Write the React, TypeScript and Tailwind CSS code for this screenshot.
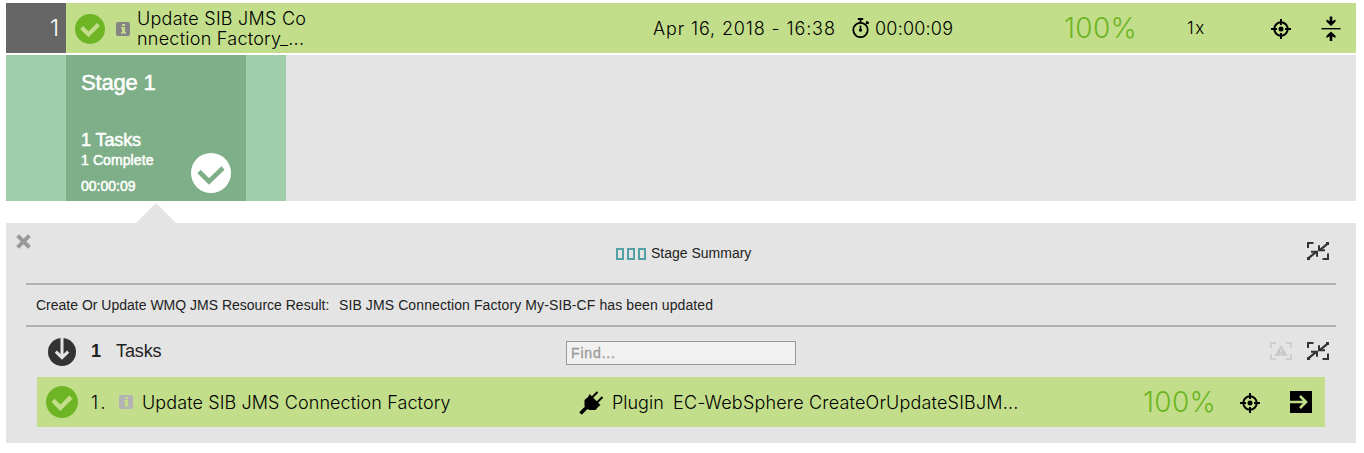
import React from 'react';

const LIGHT = "font-['Inter','Liberation_Sans',sans-serif] font-light whitespace-nowrap";

function CheckDisc({ size, disc, tick, thin = false }: { size: number; disc: string; tick: string; thin?: boolean }) {
  return (
    <svg width={size} height={size} viewBox="0 0 40 40" className="block shrink-0">
      <circle cx="20" cy="20" r="20" fill={disc} />
      <path
        d={thin ? 'M8 18.5 L18 28.5 L32 15' : 'M8.8 18 L18 27.2 L31.2 14'}
        fill="none"
        stroke={tick}
        strokeWidth={thin ? 4.6 : 5.6}
      />
    </svg>
  );
}

function InfoBadge({ fill, ink }: { fill: string; ink: string }) {
  return (
    <svg width="14" height="14" viewBox="0 0 14 14" className="block shrink-0">
      <rect width="14" height="14" rx="2" fill={fill} />
      <path d="M6 2h3v2H6zM5 5h4v5h1v1.500H5V10h1V6.500H5z" fill={ink} />
    </svg>
  );
}

function Target() {
  return (
    <svg width="20" height="20" viewBox="0 0 20 20" className="block shrink-0" fill="none" stroke="#000" strokeWidth="2">
      <circle cx="10" cy="10" r="6.7" />
      <circle cx="10" cy="10" r="2.5" fill="#000" stroke="none" />
      <path d="M10 0v6M10 14v6M0 10h6M14 10h6" />
    </svg>
  );
}

function Stopwatch() {
  return (
    <svg width="18" height="20" viewBox="0 0 18 20" className="block shrink-0" fill="none" stroke="#000" strokeWidth="1.8">
      <circle cx="8.5" cy="12" r="7.2" />
      <path d="M5.8 1h5.4M8.5 1v4M14 5.8l1.8-1.8M14.3 3.3l2.4 2.2" />
      <path d="M8.5 7.5v6" strokeWidth="1.6" />
      <circle cx="8.5" cy="12" r="1.6" fill="#000" stroke="none" />
    </svg>
  );
}

function CollapseRow() {
  return (
    <svg width="20" height="26" viewBox="0 0 20 26" className="block shrink-0" fill="none" stroke="#000">
      <path d="M0.5 12.7h19" strokeWidth="1.4" />
      <path d="M10 0.500v7M10 25v-7" strokeWidth="2.6" />
      <path d="M5.500 3.400l4.500 2.300 4.500-2.300v2.400L10 10 5.500 5.800zM5.500 22.100l4.500-2.300 4.500 2.300v-2.400L10 15.500 5.500 19.700z" fill="#000" stroke="none" />
    </svg>
  );
}

function Shrink() {
  return (
    <svg width="22" height="18" viewBox="0 0 22 18" className="block shrink-0" fill="none" stroke="#333">
      <path d="M1 6V1h5.5M15.5 17H21v-5.500" strokeWidth="2" />
      <path d="M1 16.6L9.200 9.800M21 1.400L12.800 8.200" strokeWidth="2.200" />
      <path d="M4 9.800h6v5M18 8.200h-6v-5" strokeWidth="2" />
      <path d="M0 15h3v3H0zM19 0h3v3h-3z" fill="#333" stroke="none" />
    </svg>
  );
}

function WarnFrame() {
  return (
    <svg width="22" height="18" viewBox="0 0 22 18" className="block shrink-0" fill="none" stroke="#cecece">
      <path d="M1 6V1h5M16 1h5v5M21 12v5h-5M6 17H1v-5" strokeWidth="1.800" />
      <path d="M11 3.200L17.500 13.800h-13z" fill="#c8c8c8" stroke="none" />
      <path d="M11 6.800v3.200M11 11v1.500" stroke="#e4e4e4" strokeWidth="1.300" />
    </svg>
  );
}

function Plug() {
  return (
    <svg width="25" height="25" viewBox="0 0 25 25" className="block shrink-0">
      <path d="M1.500 23.500L8 17" stroke="#000" strokeWidth="3.600" />
      <path d="M13 7.500L18.500 2M18 12.500L23.500 7" stroke="#000" strokeWidth="2" />
      <path d="M10.500 4L21.500 15 19.500 16.500 16.500 20H10L5.500 16V10L9.500 6.500z" fill="#000" />
    </svg>
  );
}

export default function App() {
  return (
    <main className="h-[453px] w-[1364px] overflow-hidden bg-white px-[6px] pt-[3px] font-['Liberation_Sans',Arial,sans-serif] text-[#222]">
      <header className={`flex h-[50px] w-[1350px] items-center bg-[#c3de8a] text-[18px] text-black ${LIGHT}`}>
        <div className="flex h-full w-[60px] items-center justify-end bg-[#666] pr-[7px] text-[23px] text-white">1</div>
        <div className="flex w-[71px] items-center pt-[2px] pl-[9px]">
          <CheckDisc size={30} disc="#6eb525" tick="#c3de8a" />
          <span className="ml-[11px]"><InfoBadge fill="#858585" ink="#c3de8a" /></span>
        </div>
        <div className="w-[516px] pt-px text-[18px] leading-[20px] tracking-[0.25px]">
          <p>Update SIB JMS Co</p>
          <p>nnection Factory_...</p>
        </div>
        <p className="w-[199px] tracking-[0.87px]">Apr 16, 2018 - 16:38</p>
        <div className="flex w-[212px] items-center">
          <Stopwatch />
          <span className="ml-[5px] tracking-[0.2px]">00:00:09</span>
        </div>
        <p className="w-[123px] text-[28px] tracking-[0.3px] text-[#6eb525]">100%</p>
        <p className="w-[84px] pt-px text-[17px] tracking-[1.5px]">1x</p>
        <span className="pt-[2px]"><Target /></span>
        <span className="ml-[30px] pt-px"><CollapseRow /></span>
      </header>

      <section className="mt-[2px] flex h-[146px] w-[1350px] bg-[#e4e4e4]">
        <div className="flex w-[280px] bg-[#a0ceab] pl-[60px]">
          <div className="flex w-[180px] justify-between bg-[#7eaf88] pr-[15px] pl-[15px] text-white [-webkit-text-stroke:0.5px_white]">
            <div className="whitespace-nowrap">
              <h2 className="mt-[15px] text-[22px] leading-[26px] tracking-[-0.2px]">Stage 1</h2>
              <p className="mt-[33px] text-[18px] leading-[22px] tracking-[-0.1px]">1 Tasks</p>
              <p className="text-[14px] leading-[18px] tracking-[0.1px]">1 Complete</p>
              <p className="mt-[8px] text-[14px] leading-[18px]">00:00:09</p>
            </div>
            <div className="mt-[98px]"><CheckDisc size={40} disc="#fff" tick="#7eaf88" thin /></div>
          </div>
        </div>
      </section>

      <svg width="40" height="20" viewBox="0 0 40 20" className="mt-[2px] ml-[130px] block">
        <path d="M20 0L40 20H0z" fill="#e4e4e4" />
      </svg>

      <section className="h-[220px] w-[1350px] bg-[#e4e4e4]">
        <div className="flex h-[60px] pl-[10px]">
          <svg width="15" height="15" viewBox="0 0 15 15" className="mt-[11px] block">
            <path d="M1.600 1.600L13.400 13.400M13.400 1.600L1.600 13.400" stroke="#999" strokeWidth="4" />
          </svg>
          <div className="ml-[585px] flex h-full w-[691px] items-center text-[14px] whitespace-nowrap">
            <svg width="30" height="12" viewBox="0 0 30 12" className="mt-px mr-[5px] block" fill="none" stroke="#53a1a5" strokeWidth="2">
              <path d="M1 1h6v10H1zM12 1h6v10h-6zM23 1h6v10h-6z" />
            </svg>
            Stage Summary
          </div>
          <span className="mt-[19px]"><Shrink /></span>
        </div>
        <div className="mx-[20px] flex h-[44px] items-center border-y-2 border-[#b0b0b0] pl-[10px] text-[14px] whitespace-nowrap">
          <span className="w-[303px]">Create Or Update WMQ JMS Resource Result:</span>
          <span className="tracking-[0.1px]">SIB JMS Connection Factory My-SIB-CF has been updated</span>
        </div>
        <div className="flex h-[50px] items-center pl-[42px] text-[18px]">
          <svg width="28" height="28" viewBox="0 0 28 28" className="block">
            <circle cx="14" cy="14" r="14" fill="#333" />
            <path d="M14 0v20M7.800 13.700L14 19.700 20.200 13.700" fill="none" stroke="#e4e4e4" strokeWidth="3" />
          </svg>
          <b className="ml-[15px] w-[25px] pb-[2px]">1</b>
          <span className="w-[450px] pb-[2px] tracking-[-0.1px]">Tasks</span>
          <input
            placeholder="Find..."
            className="mt-[2px] h-[24px] w-[230px] border border-[#979797] bg-[#f1f1f1] px-[4px] text-[14px] tracking-[0.85px] outline-none placeholder:text-[#999] placeholder:[-webkit-text-stroke:0.3px_#999]"
          />
          <span className="ml-[474px] pb-[2px]"><WarnFrame /></span>
          <span className="ml-[15px] pb-[2px]"><Shrink /></span>
        </div>
        <div className={`ml-[31px] flex h-[50px] w-[1288px] items-center bg-[#c3de8a] pl-[9px] text-[18px] text-black ${LIGHT}`}>
          <CheckDisc size={32} disc="#6eb525" tick="#c3de8a" />
          <span className="ml-[13px] w-[28px] tracking-[2.5px]">1.</span>
          <InfoBadge fill="#b3b3b3" ink="#c3de8a" />
          <span className="ml-[9px] w-[437px] tracking-[0.1px]">Update SIB JMS Connection Factory</span>
          <Plug />
          <span className="ml-[8px] w-[61px]">Plugin</span>
          <span className="w-[470px] tracking-[0.18px]">EC-WebSphere CreateOrUpdateSIBJM...</span>
          <span className="w-[97px] text-[28px] tracking-[0.3px] text-[#6eb525]">100%</span>
          <span className="pt-[2px]"><Target /></span>
          <svg width="22" height="22" viewBox="0 0 22 22" className="ml-[30px] block">
            <path d="M0 0h22v22H0z" />
            <path d="M0 11h16M10 5l6 6-6 6" fill="none" stroke="#c3de8a" strokeWidth="2.600" />
          </svg>
        </div>
      </section>
    </main>
  );
}
